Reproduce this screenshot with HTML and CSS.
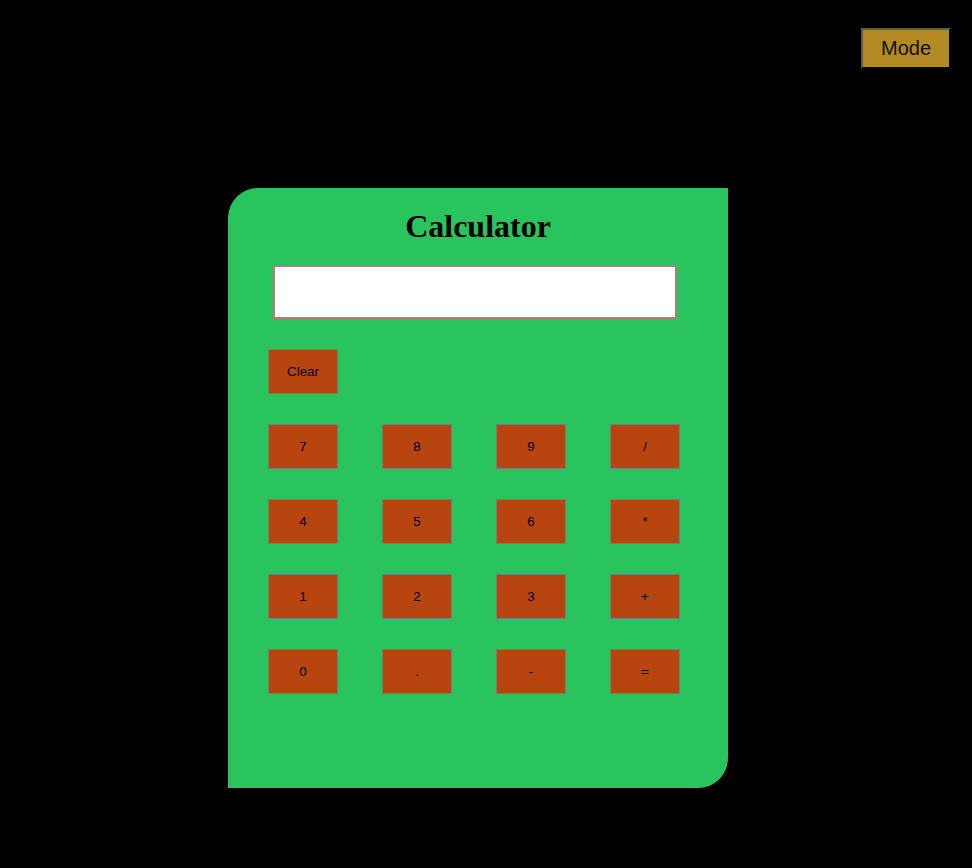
FILE: index.html
```html
<!DOCTYPE html>
<html>
<head>
<meta charset="utf-8">
<link rel="stylesheet" href="styles.css">
</head>
<body>
<div class="top">
  <button class="mode">Mode</button>
</div>
<div class="stage">
  <div class="calc">
    <h1 class="title">Calculator</h1>
    <input class="display" type="text">
    <div class="keys">
      <button class="key">Clear</button>
      <span></span><span></span><span></span>
      <button class="key">7</button>
      <button class="key">8</button>
      <button class="key">9</button>
      <button class="key">/</button>
      <button class="key">4</button>
      <button class="key">5</button>
      <button class="key">6</button>
      <button class="key">*</button>
      <button class="key">1</button>
      <button class="key">2</button>
      <button class="key">3</button>
      <button class="key">+</button>
      <button class="key">0</button>
      <button class="key">.</button>
      <button class="key">-</button>
      <button class="key">=</button>
    </div>
  </div>
</div>
</body>
</html>
```
FILE: styles.css
```css
html, body {
  margin: 0;
  padding: 0;
  background: #000;
}
body {
  width: 972px;
  height: 868px;
  overflow: hidden;
}
.top {
  display: flex;
  justify-content: flex-end;
  padding: 28px 21px 0 0;
  height: 41px;
}
.mode {
  width: 90px;
  height: 41px;
  background: #b48a24;
  color: #111;
  font-family: "Liberation Sans", Arial, sans-serif;
  font-size: 20px;
  border-style: solid;
  border-width: 2px;
  border-color: #5a5a5a #000 #000 #5a5a5a;
  padding: 0;
  margin: 0;
}
.stage {
  padding: 119px 0 0 228px;
}
.calc {
  width: 500px;
  height: 600px;
  box-sizing: border-box;
  background: #2ac45e;
  border-radius: 30px 0 30px 0;
  display: flex;
  flex-direction: column;
  align-items: center;
  padding-top: 18px;
}
.title {
  margin: 0;
  font-family: "Liberation Serif", "Times New Roman", serif;
  font-weight: bold;
  font-size: 32px;
  line-height: 40px;
  color: #000;
}
.display {
  box-sizing: border-box;
  align-self: flex-start;
  width: 404px;
  height: 54px;
  margin: 19px 0 0 45px;
  padding: 0;
  border: 2px solid #b07a78;
  background: #fff;
  outline: none;
}
.keys {
  margin-top: 30px;
  align-self: flex-start;
  margin-left: 40px;
  display: grid;
  grid-template-columns: repeat(4, 70px);
  grid-auto-rows: 45px;
  column-gap: 44px;
  row-gap: 30px;
}
.key {
  box-sizing: border-box;
  width: 70px;
  height: 45px;
  margin: 0;
  padding: 0;
  background: #b84410;
  border: 1px solid #7a7a7a;
  color: #000;
  font-family: "Liberation Sans", Arial, sans-serif;
  font-size: 13.33px;
}
```
